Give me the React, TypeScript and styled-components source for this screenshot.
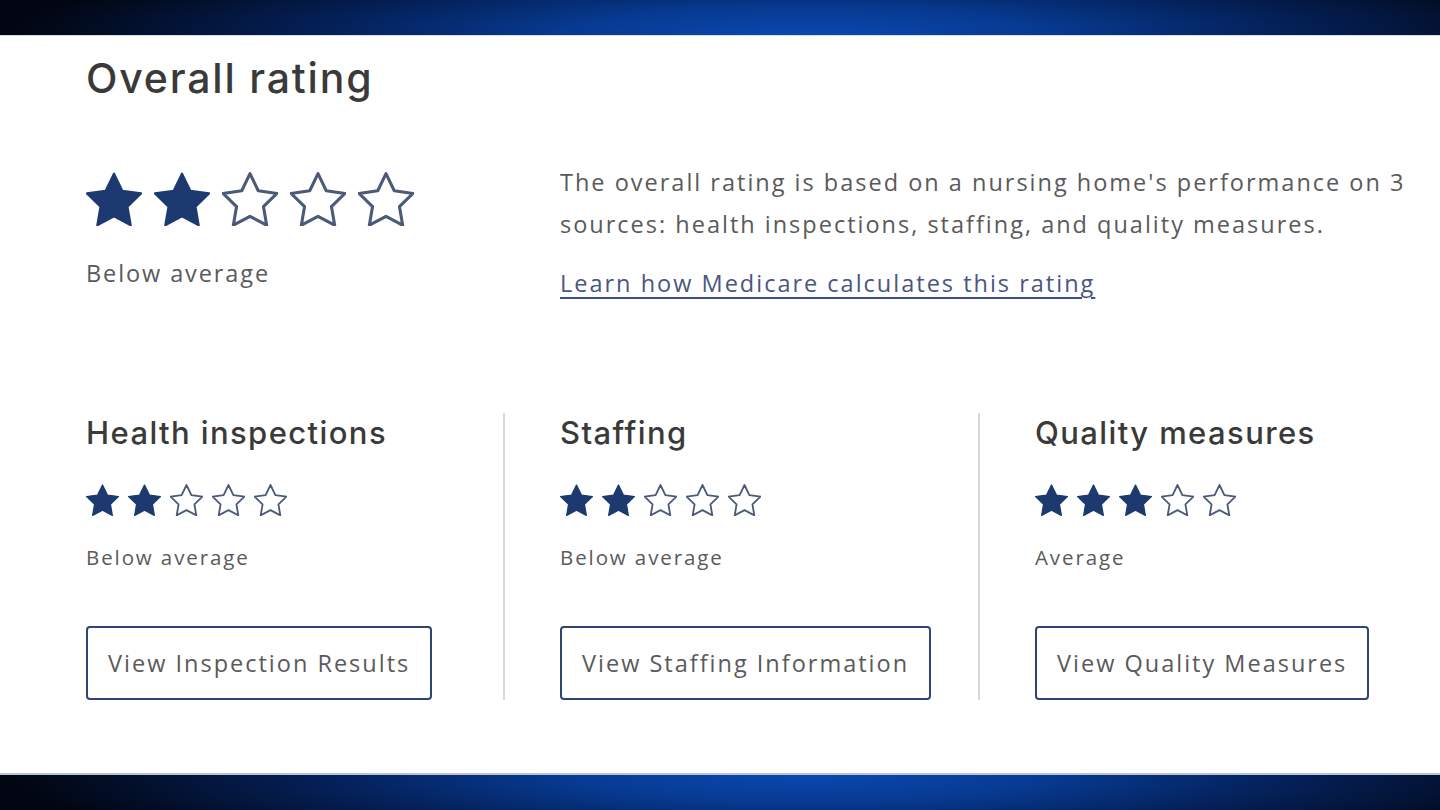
import React from "react";
import styled, { createGlobalStyle } from "styled-components";

const Global = createGlobalStyle`
  html, body { margin: 0; padding: 0; background: #fff; }
  body { width: 1440px; height: 810px; overflow: hidden; }
`;

const Page = styled.div`
  width: 1440px;
  height: 810px;
  display: flex;
  flex-direction: column;
  background: #fff;
  overflow: hidden;
`;

const Band = styled.div<{ $bottom?: boolean }>`
  height: 35px;
  flex: none;
  background: radial-gradient(ellipse 55% 260% at 56% ${(p) => (p.$bottom ? "0%" : "100%")}, #0a48b0 0%, #073a92 30%, #04215a 60%, #010612 100%);
  ${(p) => (p.$bottom ? "border-top: 2px solid #b9c3d3;" : "border-bottom: 1px solid #d8dde6;")}
`;

const Main = styled.main`
  flex: 1;
  padding: 14px 0 0 86px;
  font-family: "Open Sans", "Liberation Sans", sans-serif;
  color: #5a5a5a;
`;

const Title = styled.h1`
  margin: 0;
  font-family: Inter, "Open Sans", sans-serif;
  font-weight: 500;
  font-size: 41px;
  line-height: 56px;
  color: #3a3a3a;
  letter-spacing: 1.8px;
`;

const TopRow = styled.section`
  display: grid;
  grid-template-columns: 474px 1fr;
  align-items: start;
  margin-top: 66px;
  height: 200px;
`;

const StarRow = styled.div<{ $gap: number }>`
  display: flex;
  gap: ${(p) => p.$gap}px;
  align-items: center;
`;

const Label = styled.div<{ $size: number }>`
  font-size: ${(p) => p.$size}px;
  letter-spacing: 1.9px;
  color: #5a5a5a;
  line-height: 1.2;
`;

const BigLabel = styled(Label)`
  margin-top: 33px;
`;

const Desc = styled.p`
  margin: -11px 0 0;
  font-size: 23.5px;
  letter-spacing: 2px;
  line-height: 42px;
  color: #5a5a5a;
  max-width: 860px;
`;

const LearnLink = styled.a`
  display: inline-block;
  margin-top: 22px;
  font-size: 23.5px;
  letter-spacing: 2px;
  color: #4a5680;
  text-decoration: underline;
  text-decoration-color: #3d4f86;
  text-decoration-thickness: 2px;
  text-underline-offset: 5px;
`;

const Categories = styled.section`
  display: flex;
  align-items: flex-start;
  margin-top: 41px;
`;

const Category = styled.div<{ $last?: boolean; $first?: boolean }>`
  flex: none;
  display: flex;
  flex-direction: column;
  align-items: flex-start;
  padding-left: ${(p) => (p.$first ? 0 : 55)}px;
  width: ${(p) => (p.$first ? 417 : 418)}px;
  border-right: ${(p) => (p.$last ? "none" : "2px solid #d9d9d9")};
`;

const CatTitle = styled.h2`
  margin: 2px 0 0;
  font-family: Inter, "Open Sans", sans-serif;
  font-weight: 500;
  font-size: 31px;
  letter-spacing: 1.4px;
  line-height: 36px;
  color: #3a3a3a;
`;

const SmallStars = styled.div`
  margin-top: 33px;
`;

const SmallLabel = styled(Label)`
  margin-top: 29px;
`;

const ViewButton = styled.button`
  margin-top: 56px;
  height: 74px;
  box-sizing: border-box;
  padding: 0 20px;
  background: #fff;
  border: 2.5px solid #2f4577;
  border-radius: 4px;
  font-family: "Open Sans", "Liberation Sans", sans-serif;
  font-size: 23.5px;
  letter-spacing: 2px;
  color: #5a5a5a;
  cursor: pointer;
`;

const STAR = "M12 2.2l2.95 6.1 6.7.95-4.85 4.7 1.15 6.65L12 17.45l-5.95 3.15 1.15-6.65-4.85-4.7 6.7-.95z";

function Star({ filled, size }: { filled: boolean; size: number }) {
  return (
    <svg width={size} height={size * 0.97} viewBox="2 1.6 20 19.4" aria-hidden>
      <path
        d={STAR}
        fill={filled ? "#1c3a70" : "none"}
        stroke={filled ? "#1c3a70" : "#4b5a78"}
        strokeWidth={filled ? 0.8 : 1.1}
        strokeLinejoin="round"
      />
    </svg>
  );
}

function Stars({ count, size, gap }: { count: number; size: number; gap: number }) {
  return (
    <StarRow $gap={gap}>
      {[0, 1, 2, 3, 4].map((i) => (
        <Star key={i} filled={i < count} size={size} />
      ))}
    </StarRow>
  );
}

const categories = [
  { title: "Health inspections", stars: 2, label: "Below average", button: "View Inspection Results" },
  { title: "Staffing", stars: 2, label: "Below average", button: "View Staffing Information" },
  { title: "Quality measures", stars: 3, label: "Average", button: "View Quality Measures" },
];

export default function App() {
  return (
    <Page>
      <Global />
      <Band />
      <Main>
        <Title>Overall rating</Title>
        <TopRow>
          <div>
            <Stars count={2} size={56} gap={12} />
            <BigLabel $size={23.5}>Below average</BigLabel>
          </div>
          <div>
            <Desc>
              The overall rating is based on a nursing home's performance on 3 sources: health inspections, staffing, and quality measures.
            </Desc>
            <LearnLink href="#">Learn how Medicare calculates this rating</LearnLink>
          </div>
        </TopRow>
        <Categories>
          {categories.map((c, i) => (
            <Category key={c.title} $first={i === 0} $last={i === categories.length - 1}>
              <CatTitle>{c.title}</CatTitle>
              <SmallStars>
                <Stars count={c.stars} size={33} gap={9} />
              </SmallStars>
              <SmallLabel $size={20.5}>{c.label}</SmallLabel>
              <ViewButton>{c.button}</ViewButton>
            </Category>
          ))}
        </Categories>
      </Main>
      <Band $bottom />
    </Page>
  );
}
